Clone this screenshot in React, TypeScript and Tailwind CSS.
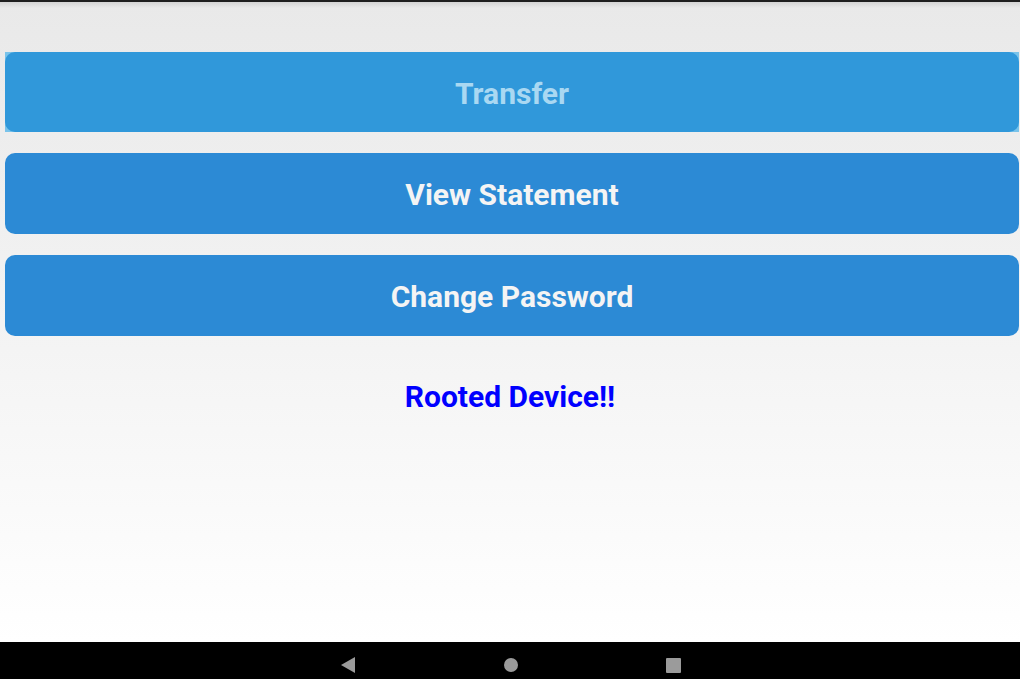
export default function App() {
  return (
    <div className="w-[1020px] h-[679px] flex flex-col overflow-hidden font-['Roboto',sans-serif]">
      <div className="h-[2px] bg-[#1e1e1e]" />
      <main className="flex-1 flex flex-col bg-gradient-to-b from-[#e9e9e9] via-[#f3f3f3] to-white">
        <div className="h-[6px] bg-gradient-to-b from-[#d4d4d4] to-transparent" />
        <div className="flex flex-col gap-[21px] px-[5px] pt-[44px] pr-[1px]">
          <div className="bg-[#79c3ea]">
            <button className="w-full h-[80px] rounded-[10px] bg-[#3098da] text-[#a9d8f2] text-[30px] leading-none font-bold pt-[3px]">
              Transfer
            </button>
          </div>
          <button className="w-full h-[81px] rounded-[10px] bg-[#2c8ad5] text-[#f4f4f4] text-[30px] leading-none font-bold pt-[3px]">
            View Statement
          </button>
          <button className="w-full h-[81px] rounded-[10px] bg-[#2c8ad5] text-[#f4f4f4] text-[30px] leading-none font-bold pt-[3px]">
            Change Password
          </button>
        </div>
        <p className="mt-[46px] text-center text-[30px] leading-none font-bold text-[#0000ff]">Rooted Device!!</p>
      </main>
      <nav className="h-[37px] bg-black flex items-start justify-center gap-[148px] pt-[15px]">
        <svg width="16" height="16" viewBox="0 0 16 16">
          <polygon points="1,8 15,0 15,16" fill="#9b9b9b" />
        </svg>
        <span className="mt-[1px] w-[14px] h-[14px] rounded-full bg-[#9b9b9b]" />
        <span className="mt-[1px] w-[15px] h-[15px] rounded-[1px] bg-[#9b9b9b]" />
      </nav>
    </div>
  );
}
